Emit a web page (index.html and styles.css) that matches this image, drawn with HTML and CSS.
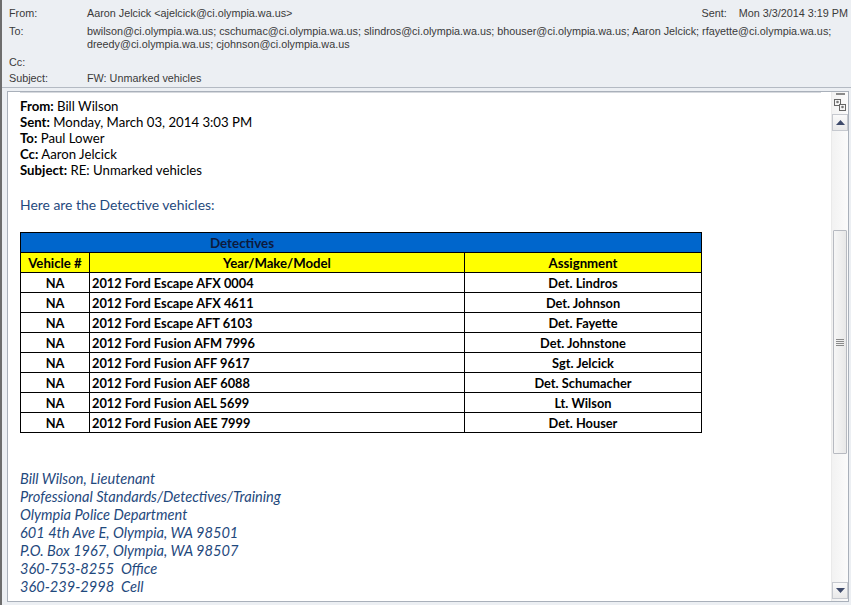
FILE: index.html
```html
<!DOCTYPE html>
<html lang="en">
<head>
  <meta charset="UTF-8" />
  <title>FW: Unmarked vehicles</title>
  <link rel="stylesheet" href="styles.css">
</head>
<body>
  <div class="window">
    <div class="header">
      <div class="hrow">
        <span class="hlabel">From:</span>
        <span class="hvalue">Aaron Jelcick &lt;ajelcick@ci.olympia.wa.us&gt;</span>
        <span class="sent"><span class="sent-label">Sent:</span>Mon 3/3/2014 3:19 PM</span>
      </div>
      <div class="hrow">
        <span class="hlabel">To:</span>
        <span class="hvalue">bwilson@ci.olympia.wa.us; cschumac@ci.olympia.wa.us; slindros@ci.olympia.wa.us; bhouser@ci.olympia.wa.us; Aaron Jelcick; rfayette@ci.olympia.wa.us;<br>dreedy@ci.olympia.wa.us; cjohnson@ci.olympia.wa.us</span>
      </div>
      <div class="hrow">
        <span class="hlabel">Cc:</span>
        <span class="hvalue"></span>
      </div>
      <div class="hrow last">
        <span class="hlabel">Subject:</span>
        <span class="hvalue">FW: Unmarked vehicles</span>
      </div>
    </div>

    <div class="message">
      <div class="content">
        <div class="fwd">
          <div><b>From:</b> Bill Wilson</div>
          <div><b>Sent:</b> Monday, March 03, 2014 3:03 PM</div>
          <div><b>To:</b> Paul Lower</div>
          <div><b>Cc:</b> Aaron Jelcick</div>
          <div><b>Subject:</b> RE: Unmarked vehicles</div>
        </div>

        <p class="intro">Here are the Detective vehicles:</p>

        <table class="vehicles">
          <tr class="title-row">
            <td colspan="3">Detectives</td>
          </tr>
          <tr class="head-row">
            <td class="c1">Vehicle #</td>
            <td class="c2">Year/Make/Model</td>
            <td class="c3">Assignment</td>
          </tr>
          <tr><td class="c1">NA</td><td>2012 Ford Escape AFX 0004</td><td class="c3">Det. Lindros</td></tr>
          <tr><td class="c1">NA</td><td>2012 Ford Escape AFX 4611</td><td class="c3">Det. Johnson</td></tr>
          <tr><td class="c1">NA</td><td>2012 Ford Escape AFT 6103</td><td class="c3">Det. Fayette</td></tr>
          <tr><td class="c1">NA</td><td>2012 Ford Fusion AFM 7996</td><td class="c3">Det. Johnstone</td></tr>
          <tr><td class="c1">NA</td><td>2012 Ford Fusion AFF 9617</td><td class="c3">Sgt. Jelcick</td></tr>
          <tr><td class="c1">NA</td><td>2012 Ford Fusion AEF 6088</td><td class="c3">Det. Schumacher</td></tr>
          <tr><td class="c1">NA</td><td>2012 Ford Fusion AEL 5699</td><td class="c3">Lt. Wilson</td></tr>
          <tr><td class="c1">NA</td><td>2012 Ford Fusion AEE 7999</td><td class="c3">Det. Houser</td></tr>
        </table>

        <div class="signature">
          <div>Bill Wilson, Lieutenant</div>
          <div>Professional Standards/Detectives/Training</div>
          <div>Olympia Police Department</div>
          <div>601 4th Ave E, Olympia, WA 98501</div>
          <div>P.O. Box 1967, Olympia, WA 98507</div>
          <div>360-753-8255&nbsp; Office</div>
          <div>360-239-2998&nbsp; Cell</div>
        </div>
      </div>

      <div class="scrollbar">
        <div class="dash"></div>
        <div class="people">
          <svg width="12" height="12" viewBox="0 0 12 12">
            <rect x="0.5" y="0.5" width="6" height="6" fill="#f4f4f4" stroke="#666"/>
            <rect x="5.5" y="5.5" width="6" height="6" fill="#f4f4f4" stroke="#666"/>
            <circle cx="3.5" cy="3" r="1.3" fill="#777"/>
            <circle cx="8.5" cy="8" r="1.3" fill="#777"/>
          </svg>
        </div>
        <div class="arrow">
          <svg width="9" height="5" viewBox="0 0 9 5"><path d="M0 5 L4.5 0 L9 5 Z" fill="#3e4a6a"/></svg>
        </div>
        <div class="track">
          <div class="thumb">
            <div class="grip"></div>
          </div>
        </div>
        <div class="arrow">
          <svg width="9" height="5" viewBox="0 0 9 5"><path d="M0 0 L4.5 5 L9 0 Z" fill="#3e4a6a"/></svg>
        </div>
      </div>
    </div>
  </div>
</body>
</html>
```

FILE: styles.css
```css
body {
  margin: 0;
  background: #eceff3;
}

.window {
  height: 605px;
  border-left: 2px solid #6d6d6d;
  box-sizing: border-box;
  display: flex;
  flex-direction: column;
  overflow: hidden;
}

.header {
  padding: 7px 0 0 7px;
  height: 88px;
  box-sizing: border-box;
  font-family: "Liberation Sans", Arial, sans-serif;
  font-size: 10.8px;
  color: #3a3a3a;
  border-bottom: 1px solid #b4bac3;
}

.hrow {
  display: flex;
  line-height: 13px;
  margin-bottom: 5px;
  min-height: 13px;
}

.hrow.last {
  margin-top: -2px;
}

.hlabel {
  width: 78px;
  flex-shrink: 0;
}

.hvalue {
  flex: 1;
}

.sent {
  margin-right: 3px;
}

.sent-label {
  margin-right: 12px;
}

.message {
  flex: 1;
  margin: 3px 2px 3px 5px;
  border: 1px solid #a9b0ba;
  background: #fff;
  display: flex;
  min-height: 0;
}

.content {
  flex: 1;
  padding: 0 10px 0 12px;
  font-family: Lato, "Open Sans", sans-serif;
  font-size: 13.2px;
  color: #000;
  overflow: hidden;
}

.fwd {
  border-top: 1px solid #d6d9de;
  padding-top: 5px;
  line-height: 16px;
}

.intro {
  margin: 19px 0 19px;
  line-height: 16px;
  font-size: 13.9px;
  color: #1f497d;
}

.vehicles {
  border-collapse: collapse;
  width: 682px;
  font-weight: bold;
  font-size: 12.8px;
}

.vehicles td {
  border: 1px solid #000;
  height: 19px;
  padding: 0 2px;
  line-height: 18px;
}

.vehicles .c1 {
  width: 64px;
  text-align: center;
}

.vehicles .c2 {
  width: 370px;
  text-align: center;
}

.vehicles .c3 {
  text-align: center;
}

.title-row td {
  background: #0066cc;
  color: #0d1b3e;
  text-align: center;
  font-size: 13.4px;
  padding-right: 240px;
}

.head-row td {
  background: #ffff00;
  font-size: 13.2px;
}

.signature {
  margin-top: 37px;
  font-style: italic;
  font-size: 14.6px;
  color: #1f497d;
  line-height: 18px;
}

.scrollbar {
  width: 16px;
  display: flex;
  flex-direction: column;
  align-items: center;
  background: linear-gradient(90deg, #f2f2f2, #fbfbfb);
  border-left: 1px solid #eaeaea;
}

.dash {
  width: 9px;
  height: 2px;
  background: #8a8a8a;
  margin-top: 1px;
}

.people {
  height: 15px;
  display: flex;
  align-items: center;
  margin-top: 2px;
}

.arrow {
  width: 14px;
  height: 15px;
  border: 1px solid #c6c9cf;
  background: linear-gradient(#fafafa, #e9e9e9);
  display: flex;
  align-items: center;
  justify-content: center;
  margin: 2px 0;
}

.track {
  flex: 1;
  width: 100%;
  padding-top: 97px;
  box-sizing: border-box;
}

.thumb {
  width: 14px;
  height: 224px;
  margin: 0 auto;
  border: 1px solid #b7bac1;
  border-radius: 1px;
  background: linear-gradient(90deg, #f6f6f6, #e8e8e8);
  display: flex;
  align-items: center;
  justify-content: center;
  box-sizing: border-box;
}

.grip {
  width: 8px;
  height: 7px;
  background: repeating-linear-gradient(#8a8a8a 0 1px, transparent 1px 2px);
}
```
